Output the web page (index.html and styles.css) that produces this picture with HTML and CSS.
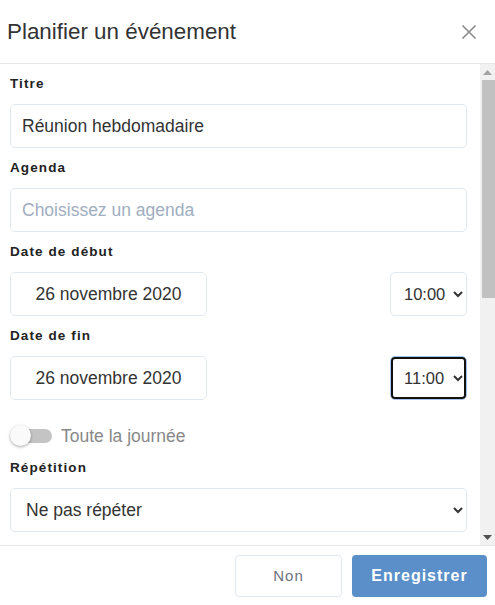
FILE: index.html
```html
<!DOCTYPE html>
<html lang="fr">
<head>
<meta charset="UTF-8">
<meta name="viewport" content="width=device-width, initial-scale=1.0">
<title>Planifier un événement</title>
<link rel="stylesheet" href="styles.css">
</head>
<body>

<div class="modal">
    <div class="modal-header">
        <h2 class="modal-title">Planifier un événement</h2>
        <button class="close" type="button" aria-label="Fermer">
            <svg width="16" height="16" viewBox="0 0 16 16">
                <path d="M1.5 1.5 L14.5 14.5 M14.5 1.5 L1.5 14.5" stroke="#8a8a8a" stroke-width="1.6" fill="none"/>
            </svg>
        </button>
    </div>

    <div class="modal-main">
        <div class="modal-body">
            <div class="field">
                <label for="titre">Titre</label>
                <input type="text" id="titre" class="control" value="Réunion hebdomadaire">
            </div>
            <div class="field">
                <label for="agenda">Agenda</label>
                <input type="text" id="agenda" class="control" placeholder="Choisissez un agenda">
            </div>
            <div class="field">
                <label>Date de début</label>
                <div class="date-row">
                    <input type="text" class="control date" value="26 novembre 2020">
                    <select class="control time">
                        <option>10:00</option>
                    </select>
                </div>
            </div>
            <div class="field">
                <label>Date de fin</label>
                <div class="date-row">
                    <input type="text" class="control date" value="26 novembre 2020">
                    <select class="control time focused">
                        <option>11:00</option>
                    </select>
                </div>
            </div>
            <div class="toggle-row">
                <span class="switch"><span class="knob"></span></span>
                <span class="toggle-label">Toute la journée</span>
            </div>
            <div class="field">
                <label for="repetition">Répétition</label>
                <select id="repetition" class="control">
                    <option>Ne pas répéter</option>
                </select>
            </div>
        </div>
        <div class="scrollbar">
            <div class="sb-btn">
                <svg width="9" height="5" viewBox="0 0 9 5"><polygon points="0,5 9,5 4.5,0" fill="#a3a3a3"/></svg>
            </div>
            <div class="sb-track"><div class="sb-thumb"></div></div>
            <div class="sb-btn">
                <svg width="9" height="5" viewBox="0 0 9 5"><polygon points="0,0 9,0 4.5,5" fill="#505050"/></svg>
            </div>
        </div>
    </div>

    <div class="modal-footer">
        <button class="btn btn-cancel" type="button">Non</button>
        <button class="btn btn-save" type="button">Enregistrer</button>
    </div>
</div>

</body>
</html>
```

FILE: styles.css
```css
body {
    margin: 0;
    font-family: "Liberation Sans", Arial, sans-serif;
    color: #333;
    background: #fff;
}
.modal {
    display: flex;
    flex-direction: column;
    height: 605px;
}
.modal-header {
    display: flex;
    align-items: center;
    justify-content: space-between;
    height: 63px;
    border-bottom: 1px solid #e5e7eb;
    padding: 0 18px 0 7px;
}
.modal-title {
    margin: 0;
    font-size: 22.4px;
    font-weight: normal;
    color: #333;
}
.close {
    background: none;
    border: none;
    padding: 0;
    display: flex;
    cursor: pointer;
}
.modal-main {
    display: flex;
    height: 481px;
}
.modal-body {
    flex: 1;
    overflow: hidden;
    padding: 10px 13px 10px 10px;
}
.scrollbar {
    width: 15px;
    display: flex;
    flex-direction: column;
    background: #f1f1f1;
}
.sb-btn {
    height: 16px;
    display: flex;
    align-items: center;
    justify-content: center;
}
.sb-track {
    flex: 1;
}
.sb-thumb {
    height: 218px;
    margin-left: 2px;
    background: #c1c1c1;
}
.field {
    margin-bottom: 10px;
}
label {
    display: block;
    font-size: 13.5px;
    font-weight: bold;
    letter-spacing: 1.1px;
    line-height: 20px;
    margin-bottom: 10px;
    color: #222;
}
.control {
    display: block;
    width: 100%;
    height: 44px;
    box-sizing: border-box;
    border: 1px solid #e2e8f0;
    border-radius: 5px;
    padding: 0 11px;
    font-family: "Liberation Sans", Arial, sans-serif;
    font-size: 17.5px;
    color: #333;
    background: #fff;
}
.control::placeholder {
    color: #a0aec0;
}
.date-row {
    display: flex;
    justify-content: space-between;
}
.control.date {
    width: 197px;
    text-align: center;
}
.control.time {
    width: 77px;
    padding: 0 0 0 9px;
    font-size: 16.5px;
}
.control.focused {
    border-color: #a9c3ec;
    outline: 2px solid #111;
    outline-offset: -3px;
}
.toggle-row {
    display: flex;
    align-items: center;
    height: 44px;
    margin-top: 14px;
}
.switch {
    position: relative;
    width: 32px;
    height: 14px;
    margin-left: 10px;
    border-radius: 7px;
    background: #c4c4c4;
}
.knob {
    position: absolute;
    left: -10px;
    top: -4px;
    width: 21px;
    height: 21px;
    border-radius: 50%;
    background: #fafafa;
    box-shadow: 0 1px 3px rgba(0, 0, 0, 0.35);
}
.toggle-label {
    margin-left: 9px;
    font-size: 17.5px;
    color: #888;
}
.modal-footer {
    display: flex;
    justify-content: flex-end;
    align-items: center;
    gap: 10px;
    height: 59px;
    border-top: 1px solid #e5e7eb;
    padding: 0 8px 0 0;
}
.btn {
    height: 42px;
    border-radius: 4px;
    font-family: "Liberation Sans", Arial, sans-serif;
    font-size: 15px;
    letter-spacing: 1px;
    cursor: pointer;
}
.btn-cancel {
    width: 107px;
    background: #fff;
    border: 1px solid #e2e8f0;
    color: #6b7280;
}
.btn-save {
    width: 135px;
    background: #5a8fca;
    border: none;
    color: #fff;
    font-size: 16px;
    font-weight: bold;
}
```
